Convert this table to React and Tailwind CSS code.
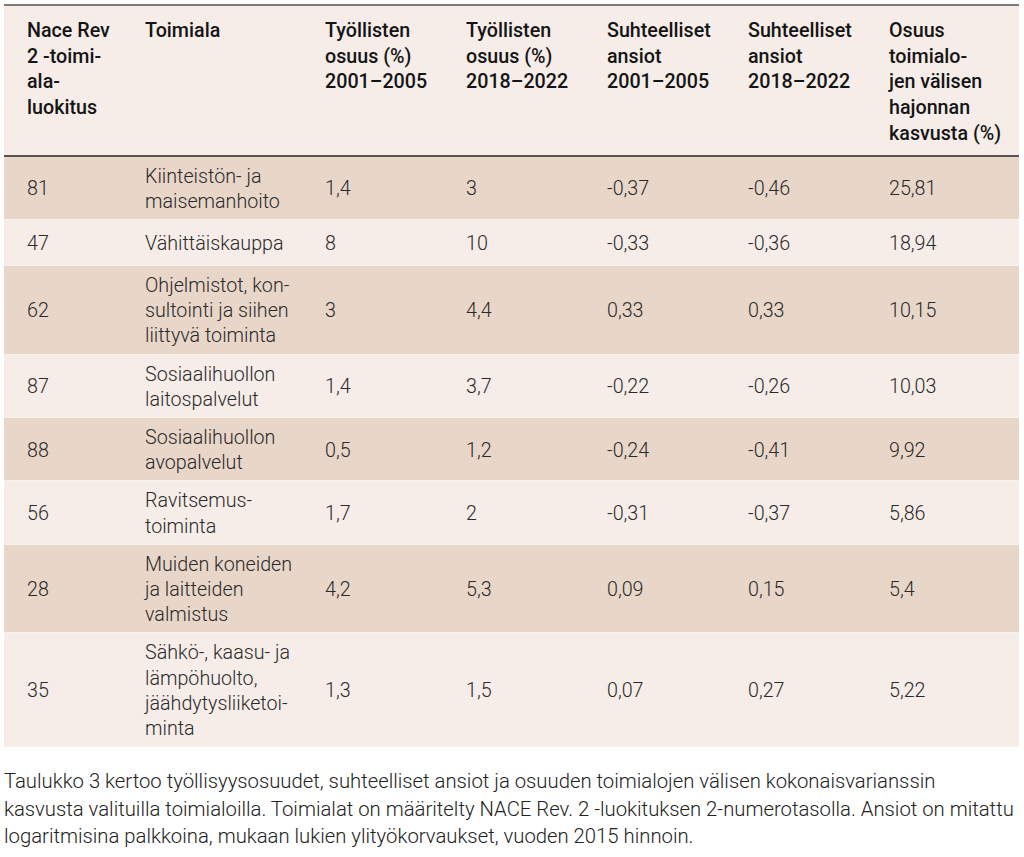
import React from "react";

const rows = [
  { code: "81", name: ["Kiinteistön- ja", "maisemanhoito"], v: ["1,4", "3", "-0,37", "-0,46", "25,81"] },
  { code: "47", name: ["Vähittäiskauppa"], v: ["8", "10", "-0,33", "-0,36", "18,94"] },
  { code: "62", name: ["Ohjelmistot, kon-", "sultointi ja siihen", "liittyvä toiminta"], v: ["3", "4,4", "0,33", "0,33", "10,15"] },
  { code: "87", name: ["Sosiaalihuollon", "laitospalvelut"], v: ["1,4", "3,7", "-0,22", "-0,26", "10,03"] },
  { code: "88", name: ["Sosiaalihuollon", "avopalvelut"], v: ["0,5", "1,2", "-0,24", "-0,41", "9,92"] },
  { code: "56", name: ["Ravitsemus-", "toiminta"], v: ["1,7", "2", "-0,31", "-0,37", "5,86"] },
  { code: "28", name: ["Muiden koneiden", "ja laitteiden", "valmistus"], v: ["4,2", "5,3", "0,09", "0,15", "5,4"] },
  { code: "35", name: ["Sähkö-, kaasu- ja", "lämpöhuolto,", "jäähdytysliiketoi-", "minta"], v: ["1,3", "1,5", "0,07", "0,27", "5,22"] },
];

const headers = [
  ["Nace Rev", "2 -toimi-", "ala-", "luokitus"],
  ["Toimiala"],
  ["Työllisten", "osuus (%)", "2001–2005"],
  ["Työllisten", "osuus (%)", "2018–2022"],
  ["Suhteelliset", "ansiot", "2001–2005"],
  ["Suhteelliset", "ansiot", "2018–2022"],
  ["Osuus", "toimialo-", "jen välisen", "hajonnan", "kasvusta (%)"],
];

const cols = "grid grid-cols-[118px_180px_141px_141px_141px_141px_153px]";

function Lines({ lines }) {
  return (
    <>
      {lines.map((l, i) => (
        <div key={i} className="whitespace-nowrap">
          {l}
        </div>
      ))}
    </>
  );
}

export default function App() {
  return (
    <div
      className="bg-white w-[1024px] min-h-[857px] px-[4px] pt-[4px]"
      style={{ fontFamily: "Roboto, 'Noto Sans', sans-serif" }}
    >
      <div className="w-[1015px]">
        <div className={`${cols} bg-[#f6ede8] border-t-2 border-[#7a7a7a] border-b-2 border-b-[#555] text-[19.7px] leading-[25.7px] font-medium text-[#151515]`}>
          {headers.map((h, i) => (
            <div key={i} className="pl-[23px] pt-[12px] pb-[8px]">
              <Lines lines={h} />
            </div>
          ))}
        </div>
        {rows.map((r, i) => (
          <div
            key={i}
            className={`${cols} min-h-[46px] text-[19.7px] leading-[25.2px] font-light text-[#2a2a2a] border-b border-[#f8f2ee] ${
              i % 2 === 0 ? "bg-[#e8d6c8]" : "bg-[#f6ede8]"
            }`}
          >
            <div className="pl-[23px] pt-[7px] pb-[5px] flex items-center">{r.code}</div>
            <div className="pl-[23px] pt-[7px] pb-[5px] flex flex-col justify-center">
              <Lines lines={r.name} />
            </div>
            {r.v.map((v, j) => (
              <div key={j} className="pl-[23px] pt-[7px] pb-[5px] flex items-center">
                {v}
              </div>
            ))}
          </div>
        ))}
        <p className="mt-[21px] text-[20.3px] leading-[27.5px] font-light text-[#222]">
          Taulukko 3 kertoo työllisyysosuudet, suhteelliset ansiot ja osuuden toimialojen välisen kokonaisvarianssin
          <br />
          kasvusta valituilla toimialoilla. Toimialat on määritelty NACE Rev. 2 -luokituksen 2-numerotasolla. Ansiot on mitattu
          <br />
          logaritmisina palkkoina, mukaan lukien ylityökorvaukset, vuoden 2015 hinnoin.
        </p>
      </div>
    </div>
  );
}
